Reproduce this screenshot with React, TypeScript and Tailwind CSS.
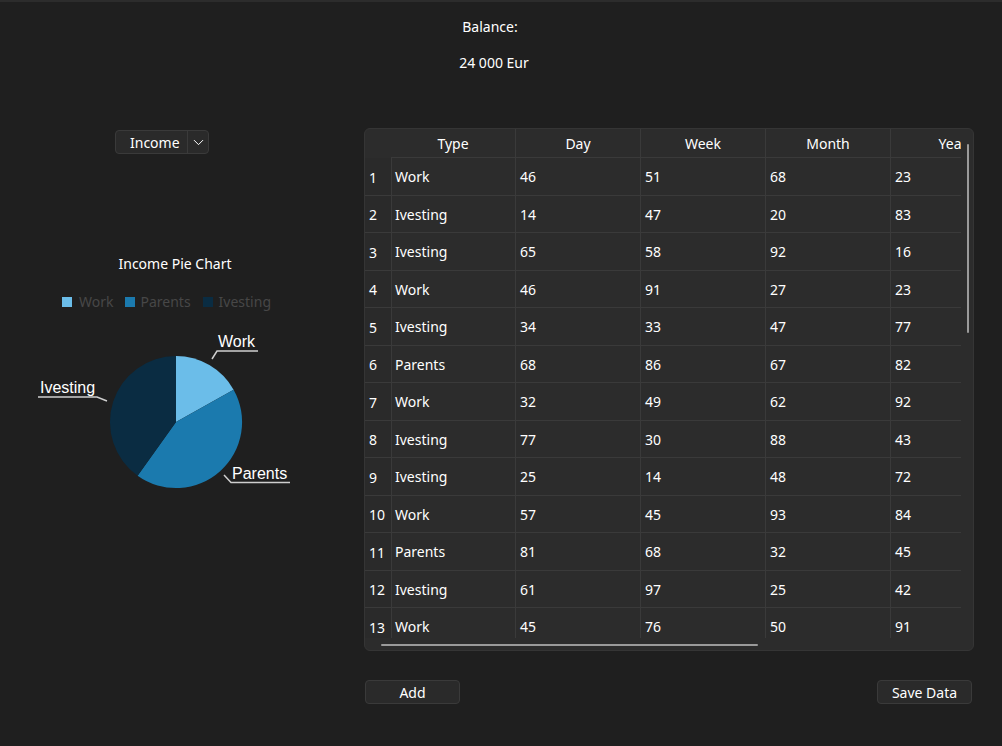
import { ChevronDown } from "lucide-react";

const rows: [string, number, number, number, number][] = [
  ["Work", 46, 51, 68, 23],
  ["Ivesting", 14, 47, 20, 83],
  ["Ivesting", 65, 58, 92, 16],
  ["Work", 46, 91, 27, 23],
  ["Ivesting", 34, 33, 47, 77],
  ["Parents", 68, 86, 67, 82],
  ["Work", 32, 49, 62, 92],
  ["Ivesting", 77, 30, 88, 43],
  ["Ivesting", 25, 14, 48, 72],
  ["Work", 57, 45, 93, 84],
  ["Parents", 81, 68, 32, 45],
  ["Ivesting", 61, 97, 25, 42],
  ["Work", 45, 76, 50, 91],
];

const cols = ["Type", "Day", "Week", "Month", "Year"];

function PieChart() {
  return (
    <svg width="340" height="180" className="block">
      <path d="M176 102 L176 36 A66 66 0 0 1 233.6 69.7 Z" fill="#6bbde9" />
      <path d="M176 102 L233.6 69.7 A66 66 0 0 1 137.6 155.7 Z" fill="#1b7aae" />
      <path d="M176 102 L137.6 155.7 A66 66 0 0 1 176 36 Z" fill="#0a2c42" />
      <g stroke="#cfcfcf" strokeWidth="1.5" fill="none">
        <polyline points="212,39 217,31 258,31" />
        <polyline points="224,155 231,162.5 290,162.5" />
        <polyline points="107,81 97,77 38,77" />
      </g>
      <g fill="#ffffff" fontFamily="'Liberation Sans', Arial, sans-serif" fontSize="16">
        <text x="218" y="27">Work</text>
        <text x="232" y="159">Parents</text>
        <text x="40" y="73">Ivesting</text>
      </g>
    </svg>
  );
}

export default function App() {
  return (
    <div
      className="w-[1002px] h-[746px] bg-[#1f1f1f] text-white text-[14px] overflow-hidden border-t-2 border-[#2c2c2c]"
      style={{ fontFamily: "'Noto Sans', 'Open Sans', sans-serif" }}
    >
      <div className="flex flex-col items-center pr-[22px]">
        <p className="mt-[15px] leading-5">Balance:</p>
        <p className="mt-4 pl-[8px] leading-5">24 000 Eur</p>
      </div>

      <div className="flex mt-[55px]">
        <div className="w-[364px] shrink-0">
          <div className="ml-[115px] mt-[2px] flex h-6 w-[94px] items-center rounded border border-[#3a3a3a] bg-[#2a2a2a]">
            <span className="flex-1 pl-[14px]">Income</span>
            <span className="h-full w-px bg-[#3a3a3a]" />
            <span className="flex w-5 justify-center">
              <ChevronDown size={17} strokeWidth={1.4} />
            </span>
          </div>
          <p className="mt-[100px] w-[350px] text-center leading-5">Income Pie Chart</p>
          <div className="ml-[62px] mt-[18px] flex items-center text-[#474747] leading-5">
            <span className="h-[10px] w-[10px] bg-[#6bbde9]" />
            <span className="ml-[7px]">Work</span>
            <span className="ml-[12px] h-[10px] w-[10px] bg-[#1b7aae]" />
            <span className="ml-[5px]">Parents</span>
            <span className="ml-[12px] h-[10px] w-[10px] bg-[#0a2c42]" />
            <span className="ml-[6px]">Ivesting</span>
          </div>
          <div className="mt-[8px]">
            <PieChart />
          </div>
        </div>

        <div className="flex flex-col">
          <div className="relative h-[523px] w-[610px] rounded-md border border-[#353535] bg-[#2c2c2c] overflow-hidden">
            <div className="h-[509px] w-[596px] overflow-hidden">
              <div className="flex h-[29px] w-[650px]">
                <div className="w-[26px] shrink-0" />
                {cols.map((c) => (
                  <div
                    key={c}
                    className="flex w-[125px] shrink-0 items-center justify-center border-r border-b border-[#3a3a3a]"
                  >
                    {c}
                  </div>
                ))}
              </div>
              {rows.map((r, i) => (
                <div key={i} className="flex h-[37.5px] w-[650px]">
                  <div className="flex w-[26px] shrink-0 items-center pl-[4px] pt-[2px] border-b border-[#3a3a3a] bg-[#2a2a2a]">
                    {i + 1}
                  </div>
                  {r.map((v, j) => (
                    <div
                      key={j}
                      className={`flex w-[125px] shrink-0 items-center border-b border-r border-[#3a3a3a] pt-[1px] ${j === 0 ? "pl-[3px] border-l" : "pl-[4px]"}`}
                    >
                      {v}
                    </div>
                  ))}
                </div>
              ))}
            </div>
            <div className="absolute left-[602px] top-[15px] h-[189px] w-[2px] rounded bg-[#9a9a9a]" />
            <div className="absolute left-[16px] top-[515px] h-[2px] w-[377px] rounded bg-[#9a9a9a]" />
          </div>

          <div className="mt-[29px] flex w-[610px] justify-between">
            <button className="h-6 w-[95px] rounded border border-[#3a3a3a] bg-[#2a2a2a] ml-px">Add</button>
            <button className="h-6 w-[95px] rounded border border-[#3a3a3a] bg-[#2a2a2a] mr-[2px]">Save Data</button>
          </div>
        </div>
      </div>
    </div>
  );
}
